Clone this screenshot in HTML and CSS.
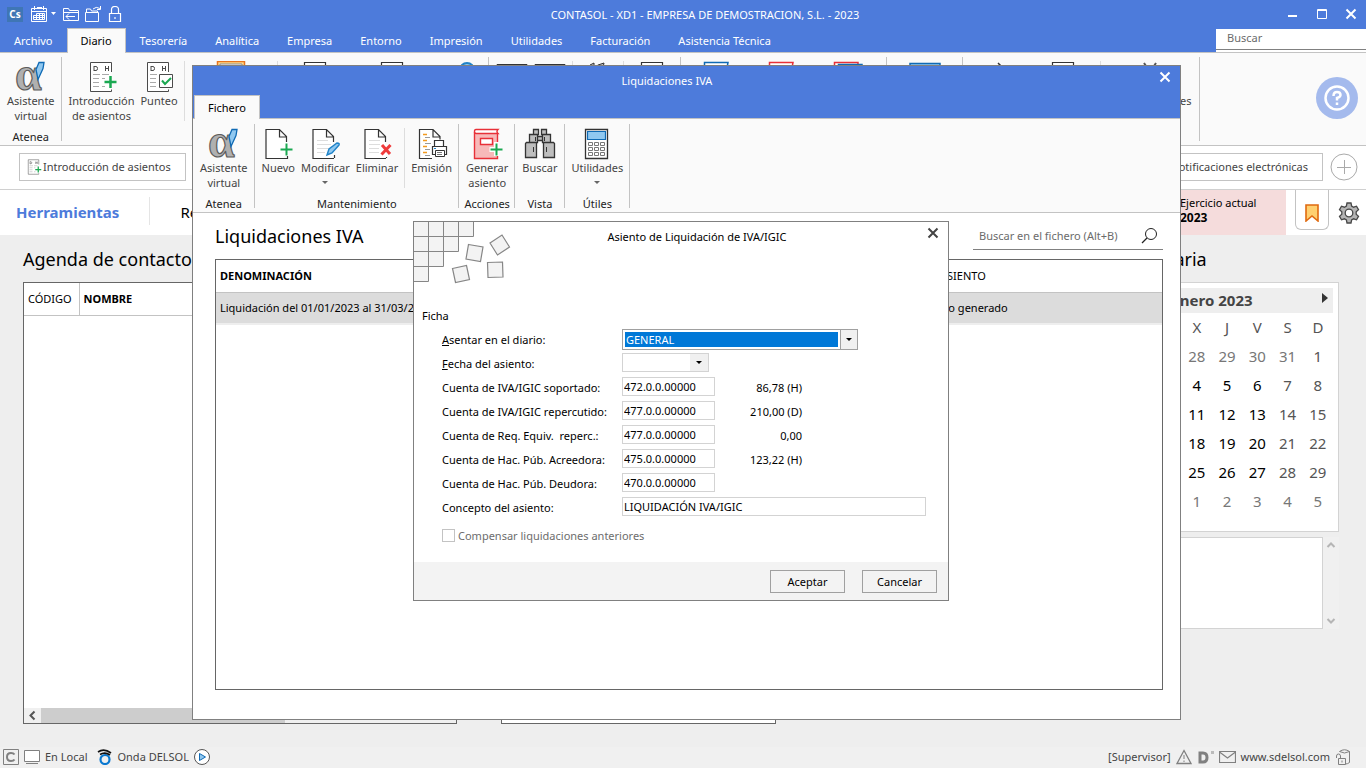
FILE: index.html
```
<!DOCTYPE html>
<html lang="es">
<head>
    <meta charset="UTF-8">
    <meta name="viewport" content="width=device-width, initial-scale=1.0">
    <title>CONTASOL - XD1 - EMPRESA DE DEMOSTRACION, S.L. - 2023</title>
    <link rel="stylesheet" href="styles.css">
</head>
<body>
    <!-- shared icons -->
    <svg class="sprite" width="0" height="0" aria-hidden="true">
        <symbol id="i-alpha" viewBox="0 0 32 32">
            <text x="0" y="29" font-family="Liberation Serif, serif" font-weight="bold" font-size="48" fill="#b0b0b0" stroke="#5c5c5c" stroke-width="1.200">α</text>
            <path d="M24 1.500h5l-1 6-5 11-2-10z" fill="#90c8f0" stroke="#0f6ab4" stroke-width="1.300"/>
        </symbol>
        <symbol id="i-entry" viewBox="0 0 32 32">
            <path d="M25.500 11V1.500h-21v29h21v-2" fill="#fff" stroke="#4b4b4b"/>
            <path d="M8 5v5M8 5.500h2q1.500 0 1.500 2t-1.500 2h-2M19.500 5v5M22.500 5v5M19.500 7.500h3" fill="none" stroke="#4b4b4b"/>
            <path d="M7 13.500h7m2 0h7M7 17.500h6m3 0h3M7 21.500h6M7 25.500h6m3 0h3" stroke="#aaa"/>
            <path d="M18.500 21h12M24.500 15v12" stroke="#1aa851" stroke-width="2.500"/>
        </symbol>
        <symbol id="i-check" viewBox="0 0 32 32">
            <path d="M25.500 11V1.500h-21v29h21v-2" fill="#fff" stroke="#4b4b4b"/>
            <path d="M8 5v5M8 5.500h2q1.500 0 1.500 2t-1.500 2h-2M19.500 5v5M22.500 5v5M19.500 7.500h3" fill="none" stroke="#4b4b4b"/>
            <path d="M7 13.500h7M7 17.500h6M7 21.500h6M7 25.500h6" stroke="#aaa"/>
            <path d="M16.500 13.500h13v13h-13z" fill="#fff" stroke="#4b4b4b"/>
            <path d="M19 19.500l3 3.500 6-6" fill="none" stroke="#1aa851" stroke-width="2"/>
        </symbol>
        <symbol id="i-doc" viewBox="0 0 32 32">
            <path d="M5.500 1.500h21v29h-21z" fill="#fff" stroke="#333" stroke-width="1.200"/>
        </symbol>
        <symbol id="i-new" viewBox="0 0 32 32">
            <path d="M22 30.500h-18v-29h13.500l7 7V14M17.500 1.500v7.500h7M25.500 28v2.500H22" fill="#fff" stroke="#333" stroke-width="1.200"/>
            <path d="M24.500 14v14" stroke="#fff" stroke-width="4"/>
            <path d="M18.500 21.500h12M24.500 15.500v12" stroke="#1aa851" stroke-width="2"/>
        </symbol>
        <symbol id="i-edit" viewBox="0 0 32 32">
            <path d="M25 30.500h-21v-29h13.500l7 7V14M17.500 1.500v7.500h7M25.500 27v3" fill="#fff" stroke="#333" stroke-width="1.200"/>
            <path d="M8 12.500h11M8 16.500h14M8 20.500h12M8 24.500h8" stroke="#ddd"/>
            <path d="M18 27l2-6 8-6q3 0 2 2l-7 8z" fill="#90c8f0" stroke="#1f83c8" stroke-width="1.400"/>
        </symbol>
        <symbol id="i-delete" viewBox="0 0 32 32">
            <path d="M25 30.500h-21v-29h13.500l7 7V14M17.500 1.500v7.500h7M25.500 29v1" fill="#fff" stroke="#333" stroke-width="1.200"/>
            <path d="M8 12.500h11M8 16.500h11M8 20.500h10M8 24.500h10" stroke="#ddd"/>
            <path d="M21 17l8 9M29.500 17l-9 9.500" stroke="#ef3b3b" stroke-width="3"/>
        </symbol>
        <symbol id="i-print" viewBox="0 0 32 32">
            <path d="M16 30.500h-12.500v-29h13.500l7 7v3M17 1.500v7.500h7" fill="#fff" stroke="#333" stroke-width="1.200"/>
            <path d="M7 6.500h4M7 12.500h4M7 18.500h4M7 24.500h4" stroke="#f29a1f" stroke-width="1.400"/>
            <path d="M9 9.500h5M9 15.500h6M9 21.500h5M9 27.500h5" stroke="#999"/>
            <path d="M18.500 19v-6.500h9V19M16.500 18.500h14v8h-14z" fill="#fff" stroke="#333" stroke-width="1.200"/>
            <path d="M19.500 22.500h9v6h-9z" fill="#fff" stroke="#333"/>
            <path d="M21 24.500h5M21 26.500h5" stroke="#777"/>
            <path d="M18 20.500h2" stroke="#1f83c8"/>
        </symbol>
        <symbol id="i-book" viewBox="0 0 32 32">
            <path d="M4 5h22v25H4z" fill="#f7b9b9"/>
            <path d="M27 5.500H5q-1.500 0-1.500-2t1.500-2h22q-2 2 0 4z" fill="#fff" stroke="#e83038" stroke-width="1.400"/>
            <path d="M26.500 5v25.500h-23V4" fill="none" stroke="#e83038" stroke-width="1.400"/>
            <path d="M9.500 10.500h12v6h-12z" fill="#fff" stroke="#e83038" stroke-width="1.400"/>
            <path d="M18.500 21.500h12M25.500 14v14" stroke="#fff" stroke-width="5"/>
            <path d="M19.500 21.500h12M25.500 15.500v12" stroke="#1aa851" stroke-width="2"/>
        </symbol>
        <symbol id="i-binoculars" viewBox="0 0 32 32">
            <path d="M9.500 1.500h5v5h-5zM17.500 1.500h5v5h-5zM5.500 6.500h8v8h-8zM18.500 6.500h8v8h-8zM13.500 8.500h5v4h-5zM1.500 15.500l1-1h10v15h-11zM19.500 14.500h10l1 1v14h-11z" fill="#bdbdbd" stroke="#333" stroke-width="1.300"/>
            <path d="M11.500 9v4M20.500 9v4M9.500 19v5M22.500 19v5" stroke="#333"/>
        </symbol>
        <symbol id="i-calc" viewBox="0 0 32 32">
            <path d="M4.500 1.500h22v29h-22z" fill="#fff" stroke="#333" stroke-width="1.300"/>
            <path d="M6.500 3.500h18v8h-18z" fill="#90c8f0" stroke="#0f6ab4" stroke-width="1.200"/>
            <path d="M7.500 14.500h4v3h-4zM13.500 14.500h4v3h-4zM19.500 14.500h4v3h-4zM7.500 19.500h4v3h-4zM13.500 19.500h4v3h-4zM19.500 19.500h4v3h-4zM7.500 24.500h4v3h-4zM13.500 24.500h4v3h-4zM19.500 24.500h4v3h-4z" fill="none" stroke="#777"/>
        </symbol>
        <symbol id="i-orange" viewBox="0 0 32 32"><path d="M2.500.5h27v29h-27z" fill="#ffd98a" stroke="#e8741c" stroke-width="1.500"/><path d="M5 3h22v25H5z" fill="#fff" stroke="#888"/></symbol>
        <symbol id="i-globe" viewBox="0 0 32 32"><circle cx="23" cy="9" r="7" fill="#90c8f0" stroke="#1f83c8" stroke-width="2"/></symbol>
        <symbol id="i-screen" viewBox="0 0 32 32"><path d="M1 3.500h30V28H1z" fill="#fff" stroke="#333"/></symbol>
        <symbol id="i-stamp" viewBox="0 0 32 32"><path d="M8 4l4-2v5l4-3 6-2-2 9-10 12z" fill="#bbb" stroke="#333"/></symbol>
        <symbol id="i-bluebook" viewBox="0 0 32 32"><path d="M28 1.500H4.500v28h23V4z" fill="#fff" stroke="#0f6ab4" stroke-width="1.500"/></symbol>
        <symbol id="i-redbook" viewBox="0 0 32 32"><path d="M28 1.500H4.500v28h23V4z" fill="#fff" stroke="#e83038" stroke-width="1.500"/></symbol>
        <symbol id="i-twobooks" viewBox="0 0 32 32"><path d="M25 1.500H1.500v28h23z" fill="#fff" stroke="#e83038" stroke-width="1.500"/><path d="M29 3.500H5.500v28h23z" fill="#fff" stroke="#0f6ab4" stroke-width="1.500"/></symbol>
        <symbol id="i-bluescreen" viewBox="0 0 32 32"><path d="M1 2.500h30V28H1z" fill="#90c8f0" stroke="#0f6ab4" stroke-width="1.500"/></symbol>
        <symbol id="i-arrow" viewBox="0 0 32 32"><path d="M16 2l10 10-10 10" fill="none" stroke="#333" stroke-width="1.500"/></symbol>
        <symbol id="i-tools" viewBox="0 0 32 32"><path d="M10 2l4 6-8 18M22 2l-4 6 8 18" fill="none" stroke="#555" stroke-width="2"/></symbol>
        <symbol id="i-close" viewBox="0 0 12 12"><path d="M1.500 1.500l9 9M10.500 1.500l-9 9" fill="none" stroke="currentColor" stroke-width="2"/></symbol>
    </svg>

    <header class="app-header">
        <div class="title-bar">
            <span class="logo">Cs</span>
            <button class="icon-btn" aria-label="Calendario">
                <svg width="26" height="16" viewBox="0 0 26 16" fill="none" stroke="#fff"><path d="M.5 2.500h15v13H.5zM0 5.500h16M3.500 0v4M12.500 0v4M6 1.500h5M5.500 7.500h8v6h-11v-4h11M2.500 11.500h11M5.500 7.500v6M8.500 7.500v6M11.500 7.500v6"/><path d="M20 6h5l-2.500 3z" fill="#fff" stroke="none"/></svg>
            </button>
            <button class="icon-btn" aria-label="Cambiar empresa">
                <svg width="16" height="16" viewBox="0 0 16 16" fill="none" stroke="#fff"><path d="M.5 14.500v-12h5l1 2h9v10zM.5 6.500h15M3 10.500h9M6 7.500l-3 3 3 3"/></svg>
            </button>
            <button class="icon-btn" aria-label="Abrir">
                <svg width="16" height="16" viewBox="0 0 16 16" fill="none" stroke="#fff"><path d="M.5 15.500v-9h13v9zM1.500 6v-3h4l1 2h6v1M8 3q3-3 7-.5M15.500 0v3.500H12"/></svg>
            </button>
            <button class="icon-btn" aria-label="Bloquear">
                <svg width="16" height="16" viewBox="0 0 16 16" fill="none" stroke="#fff"><path d="M2.500 7.500h11v8h-11zM4.500 7V3.500q0-3 3.500-3t3.500 3V7M8 11v2" stroke-width="1.200"/></svg>
            </button>
            <h1 class="app-title">CONTASOL - XD1 - EMPRESA DE DEMOSTRACION, S.L. - 2023</h1>
            <div class="window-controls">
                <button class="icon-btn" aria-label="Minimizar"><svg width="12" height="12"><path d="M1 8h9" stroke="#fff" stroke-width="2"/></svg></button>
                <button class="icon-btn" aria-label="Maximizar"><svg width="12" height="12" fill="none" stroke="#fff"><path d="M1.500 1.500h9v9h-9zM1 2.500h10"/></svg></button>
                <button class="icon-btn" aria-label="Cerrar"><svg width="12" height="12"><use href="#i-close"/></svg></button>
            </div>
        </div>
        <nav class="menu">
            <a href="#">Archivo</a>
            <a href="#" class="active">Diario</a>
            <a href="#">Tesorería</a>
            <a href="#">Analítica</a>
            <a href="#">Empresa</a>
            <a href="#">Entorno</a>
            <a href="#">Impresión</a>
            <a href="#">Utilidades</a>
            <a href="#">Facturación</a>
            <a href="#">Asistencia Técnica</a>
            <input type="search" class="menu-search" placeholder="Buscar" aria-label="Buscar">
        </nav>
    </header>

    <section class="ribbon">
        <div class="ribbon-group">
            <div class="tools">
                <button class="tool"><svg><use href="#i-alpha"/></svg>Asistente<br>virtual</button>
            </div>
            <div class="group-name">Atenea</div>
        </div>
        <div class="ribbon-group">
            <div class="tools">
                <button class="tool"><svg><use href="#i-entry"/></svg>Introducción<br>de asientos</button>
                <button class="tool"><svg><use href="#i-check"/></svg>Punteo</button>
                <span class="divider"></span>
                <button class="tool w-86"><svg><use href="#i-orange"/></svg>Asientos<br>predefinidos</button>
                <span class="divider"></span>
                <button class="tool w-68"><svg><use href="#i-doc"/></svg>Diario</button>
                <button class="tool w-86"><svg><use href="#i-doc"/></svg>Mayor</button>
                <button class="tool w-50"><svg><use href="#i-globe"/></svg>Extractos</button>
            </div>
            <div class="group-name">Diario</div>
        </div>
        <div class="ribbon-group">
            <div class="tools">
                <button class="tool w-38"><svg><use href="#i-screen"/></svg>IVA</button>
                <button class="tool w-38"><svg><use href="#i-screen"/></svg>IGIC</button>
                <span class="divider"></span>
                <button class="tool w-44"><svg><use href="#i-stamp"/></svg>SII</button>
                <span class="divider"></span>
                <button class="tool w-50"><svg><use href="#i-doc"/></svg>Modelos</button>
            </div>
            <div class="group-name">I.V.A./I.G.I.C.</div>
        </div>
        <div class="ribbon-group">
            <div class="tools">
                <button class="tool w-62"><svg><use href="#i-bluebook"/></svg>Emitidas</button>
                <button class="tool w-68"><svg><use href="#i-redbook"/></svg>Recibidas</button>
                <button class="tool w-68"><svg><use href="#i-twobooks"/></svg>Libros</button>
            </div>
            <div class="group-name">Libros</div>
        </div>
        <div class="ribbon-group">
            <div class="tools">
                <button class="tool w-68"><svg><use href="#i-bluescreen"/></svg>Bienes</button>
            </div>
            <div class="group-name">Inmovilizado</div>
        </div>
        <div class="ribbon-group">
            <div class="tools">
                <button class="tool w-62"><svg><use href="#i-arrow"/></svg>Importar</button>
                <button class="tool w-68"><svg><use href="#i-doc"/></svg>Informes</button>
                <span class="divider"></span>
                <button class="tool w-92"><svg><use href="#i-tools"/></svg>Configuraciones</button>
            </div>
            <div class="group-name">Útiles</div>
        </div>
        <button class="help" aria-label="Ayuda">
            <svg width="26" height="26" viewBox="0 0 26 26" fill="none" stroke="#fff" stroke-width="2.500"><circle cx="13" cy="13" r="11.500"/><path d="M9.500 11q0-4 3.500-4t3.500 3q0 2-3.500 3v2.500M13 17.500v2.500"/></svg>
        </button>
    </section>

    <section class="shortcuts">
        <button class="shortcut"><svg width="16" height="16"><use href="#i-entry"/></svg>Introducción de asientos</button>
        <button class="shortcut last">Notificaciones electrónicas</button>
        <button class="add" aria-label="Añadir acceso"><svg width="28" height="28" fill="none" stroke="#aaa"><circle cx="14" cy="14" r="13"/><path d="M7 14.500h14M14.500 7v14"/></svg></button>
    </section>

    <section class="views">
        <a href="#" class="view active">Herramientas</a>
        <a href="#" class="view">Resumen</a>
        <div class="exercise"><span>Ejercicio actual</span><strong>2023</strong></div>
        <button class="bookmark" aria-label="Marcadores"><svg width="16" height="18"><path d="M2 1h12v16l-6-5-6 5z" fill="#ffd070" stroke="#e06a10" stroke-width="1.600"/></svg></button>
        <button class="gear" aria-label="Ajustes">
            <svg width="22" height="22" viewBox="0 0 22 22"><path d="M9 1h4l.6 3 2 1.200 2.900-1 2 3.500-2.300 2v2.600l2.300 2-2 3.500-2.900-1-2 1.200-.6 3H9l-.6-3-2-1.200-2.900 1-2-3.500 2.300-2V9.700l-2.300-2 2-3.500 2.900 1 2-1.200z" fill="#b5b5b5" stroke="#484848" stroke-width="1.300"/><circle cx="11" cy="11" r="3.800" fill="#fff" stroke="#484848" stroke-width="1.300"/></svg>
        </button>
    </section>

    <main class="desk">
        <section class="contacts">
            <h2>Agenda de contactos</h2>
            <div class="list">
                <table>
                    <thead><tr><th class="code">CÓDIGO</th><th>NOMBRE</th></tr></thead>
                    <tbody><tr><td colspan="2" class="empty">No hay registros</td></tr></tbody>
                </table>
                <div class="scroll-x">
                    <svg width="17" height="15" fill="none" stroke="#555" stroke-width="2"><path d="M10.500 3.500l-4 4 4 4"/></svg>
                    <span class="thumb"></span>
                </div>
            </div>
        </section>
        <section class="messages">
            <h2>Mensajes</h2>
            <div class="list"></div>
        </section>
        <section class="agenda">
            <h2>Agenda diaria</h2>
            <div class="calendar">
                <div class="month">Enero 2023<button class="next" aria-label="Mes siguiente"><svg width="6" height="10"><path d="M0 0l6 5-6 5z" fill="#333"/></svg></button></div>
                <table>
                    <thead><tr><th></th><th>L</th><th>M</th><th>X</th><th>J</th><th>V</th><th>S</th><th>D</th></tr></thead>
                    <tbody>
                        <tr class="off"><td></td><td>26</td><td>27</td><td>28</td><td>29</td><td>30</td><td>31</td><td class="end">1</td></tr>
                        <tr><td></td><td>2</td><td>3</td><td>4</td><td>5</td><td>6</td><td class="end">7</td><td class="end">8</td></tr>
                        <tr><td></td><td>9</td><td>10</td><td>11</td><td>12</td><td>13</td><td class="end">14</td><td class="end">15</td></tr>
                        <tr><td></td><td>16</td><td>17</td><td>18</td><td>19</td><td>20</td><td class="end">21</td><td class="end">22</td></tr>
                        <tr><td></td><td>23</td><td>24</td><td>25</td><td>26</td><td>27</td><td class="end">28</td><td class="end">29</td></tr>
                        <tr class="off"><td></td><td>30</td><td>31</td><td>1</td><td>2</td><td>3</td><td>4</td><td>5</td></tr>
                    </tbody>
                </table>
            </div>
            <div class="notes">
                <div class="note-text"></div>
                <div class="scroll-y">
                    <svg width="10" height="8" fill="none" stroke="#b5b5b5" stroke-width="2"><path d="M1.500 6l3.500-3.500L8.500 6"/></svg>
                    <svg width="10" height="8" fill="none" stroke="#b5b5b5" stroke-width="2"><path d="M1.500 2l3.500 3.500L8.500 2"/></svg>
                </div>
            </div>
        </section>
    </main>

    <footer class="status">
        <div class="status-left">
            <svg width="16" height="16" fill="none" stroke="#808080"><path d="M.5.500h15v15H.5z"/><path d="M11.500 5.500q-1-1.500-3.500-1.500-4 0-4 4t4 4q2.500 0 3.500-1.500" stroke-width="2"/></svg>
            <svg width="18" height="16" fill="none" stroke="#808080"><path d="M1.500 1.500h15v11h-15z" fill="#fff"/><path d="M3 14.500h12"/></svg>
            <span class="local">En Local</span>
            <svg width="16" height="16" fill="none"><circle cx="8" cy="10.500" r="4.500" stroke="#0a78d0" stroke-width="2.200"/><path d="M1 3q6-4 13 1M3 5.500q5-3 10 .5" stroke="#111" stroke-width="1.700"/></svg>
            <span>Onda DELSOL</span>
            <svg width="18" height="18"><circle cx="9" cy="9" r="7.500" fill="#fff" stroke="#555"/><path d="M6.500 5.500l6 3.500-6 3.500z" fill="#90c8f0" stroke="#0f6ab4"/></svg>
        </div>
        <div class="status-right">
            <span>[Supervisor]</span>
            <svg width="16" height="16" fill="none" stroke="#808080"><path d="M8 1.500l7 13H1z" stroke-width="1.300"/><path d="M8 6v4M8 11.500v1.500"/></svg>
            <svg width="17" height="16" fill="none"><path d="M3 4h3q4 0 4 4.500T6 13H3z" stroke="#808080" stroke-width="3"/><path d="M14 2h3v3h-3z" fill="#bbb"/></svg>
            <svg width="17" height="16" fill="none" stroke="#808080"><path d="M.5 2.500h16v11H.5zM.5 3l8 6 8-6" stroke-width="1.200"/></svg>
            <a href="#">www.sdelsol.com</a>
            <svg width="16" height="16" fill="none" stroke="#808080"><path d="M4.500 2.500q5-3.500 10 0v11q-2 1.500-4 1.500M4.500 2.500q5 3 10 0"/><path d="M3.500 9.500h7v6h-7zM1.500 9V7q0-2 2-2t2 2v2M7 11.500v2"/></svg>
        </div>
    </footer>

    <!-- Liquidaciones IVA -->
    <section class="window">
        <div class="window-head">
            <div class="window-bar">
                <h2>Liquidaciones IVA</h2>
                <button class="icon-btn" aria-label="Cerrar"><svg width="12" height="12"><use href="#i-close"/></svg></button>
            </div>
            <a href="#" class="window-tab">Fichero</a>
        </div>
        <div class="ribbon">
            <div class="ribbon-group">
                <div class="tools">
                    <button class="tool"><svg><use href="#i-alpha"/></svg>Asistente<br>virtual</button>
                </div>
                <div class="group-name">Atenea</div>
            </div>
            <div class="ribbon-group">
                <div class="tools">
                    <button class="tool"><svg><use href="#i-new"/></svg>Nuevo</button>
                    <button class="tool"><svg><use href="#i-edit"/></svg>Modificar<span class="caret"></span></button>
                    <button class="tool"><svg><use href="#i-delete"/></svg>Eliminar</button>
                    <span class="divider"></span>
                    <button class="tool"><svg><use href="#i-print"/></svg>Emisión</button>
                </div>
                <div class="group-name">Mantenimiento</div>
            </div>
            <div class="ribbon-group">
                <div class="tools">
                    <button class="tool"><svg><use href="#i-book"/></svg>Generar<br>asiento</button>
                </div>
                <div class="group-name">Acciones</div>
            </div>
            <div class="ribbon-group">
                <div class="tools">
                    <button class="tool"><svg><use href="#i-binoculars"/></svg>Buscar</button>
                </div>
                <div class="group-name">Vista</div>
            </div>
            <div class="ribbon-group">
                <div class="tools">
                    <button class="tool"><svg><use href="#i-calc"/></svg>Utilidades<span class="caret"></span></button>
                </div>
                <div class="group-name">Útiles</div>
            </div>
        </div>
        <div class="window-body">
            <div class="file-head">
                <h3>Liquidaciones IVA</h3>
                <div class="file-search">
                    <input type="text" placeholder="Buscar en el fichero (Alt+B)" aria-label="Buscar en el fichero">
                    <svg width="18" height="18" fill="none" stroke="#222"><circle cx="10" cy="7" r="5.500"/><path d="M6 11l-5 5" stroke-width="1.300"/></svg>
                </div>
            </div>
            <div class="file-list">
                <table>
                    <thead><tr><th class="bold">DENOMINACIÓN</th><th class="entry">ASIENTO</th></tr></thead>
                    <tbody><tr><td>Liquidación del 01/01/2023 al 31/03/2023</td><td class="entry">No generado</td></tr></tbody>
                </table>
            </div>
        </div>
    </section>

    <!-- Asiento de liquidación -->
    <form class="dialog" role="dialog" aria-label="Asiento de Liquidación de IVA/IGIC">
        <div class="dialog-head">
            <svg class="squares" width="97" height="64" fill="#f3f3f3" stroke="#868686">
                <path d="M-.5-.5h15v15h-15zM14.500-.5h15v15h-15zM29.500-.5h15v15h-15zM44.500-.5h15v15h-15zM-.5 14.500h15v15h-15zM14.500 14.500h15v15h-15zM29.500 14.500h15v15h-15zM-.5 29.500h15v15h-15zM14.500 29.500h15v15h-15zM-.5 44.500h15v15h-15z"/>
                <path d="M54.500 22.500l14.500 2.500-2.500 14.500-14.500-2.500zM76 21l12-8 7.500 12-12 8zM38.500 46.500l14-3 3 14-14 3zM73.500 40.500l15-.5.5 15-15 .5z" stroke-width="1.200"/>
            </svg>
            <h2>Asiento de Liquidación de IVA/IGIC</h2>
            <button type="button" class="icon-btn" aria-label="Cerrar"><svg width="12" height="12"><use href="#i-close"/></svg></button>
        </div>
        <fieldset>
            <legend>Ficha</legend>
            <div class="row">
                <label for="diario"><u>A</u>sentar en el diario:</label>
                <span class="combo"><select id="diario"><option>GENERAL</option></select></span>
            </div>
            <div class="row">
                <label for="fecha"><u>F</u>echa del asiento:</label>
                <span class="date"><input type="text" id="fecha"><button type="button" aria-label="Elegir fecha"><i class="caret"></i></button></span>
            </div>
            <div class="row">
                <label for="soportado">Cuenta de IVA/IGIC soportado:</label>
                <input type="text" id="soportado" class="account" value="472.0.0.00000">
                <output>86,78 (H)</output>
            </div>
            <div class="row">
                <label for="repercutido">Cuenta de IVA/IGIC repercutido:</label>
                <input type="text" id="repercutido" class="account" value="477.0.0.00000">
                <output>210,00 (D)</output>
            </div>
            <div class="row">
                <label for="equivalencia">Cuenta de Req. Equiv.&nbsp; reperc.:</label>
                <input type="text" id="equivalencia" class="account" value="477.0.0.00000">
                <output>0,00</output>
            </div>
            <div class="row">
                <label for="acreedora">Cuenta de Hac. Púb. Acreedora:</label>
                <input type="text" id="acreedora" class="account" value="475.0.0.00000">
                <output>123,22 (H)</output>
            </div>
            <div class="row">
                <label for="deudora">Cuenta de Hac. Púb. Deudora:</label>
                <input type="text" id="deudora" class="account" value="470.0.0.00000">
            </div>
            <div class="row">
                <label for="concepto">Concepto del asiento:</label>
                <input type="text" id="concepto" class="concept" value="LIQUIDACIÓN IVA/IGIC">
            </div>
            <div class="check-row">
                <input type="checkbox" id="compensar" disabled>
                <label for="compensar">Compensar liquidaciones anteriores</label>
            </div>
        </fieldset>
        <div class="dialog-foot">
            <button type="submit">Aceptar</button>
            <button type="button">Cancelar</button>
        </div>
    </form>
</body>
</html>
```

FILE: styles.css
```
* {
    box-sizing: border-box;
}
body {
    position: relative;
    display: flex;
    flex-direction: column;
    min-height: 100vh;
    margin: 0;
    overflow: hidden;
    background: #eee;
    color: #000;
    font: 11px/15px "Noto Sans", "Open Sans", sans-serif;
}
h1, h2, h3 {
    margin: 0;
    font-weight: normal;
}
a {
    color: inherit;
    text-decoration: none;
}
button, input, select {
    margin: 0;
    padding: 0;
    border: 0;
    border-radius: 0;
    background: none;
    color: inherit;
    font: inherit;
    outline: none;
}
svg {
    display: block;
    flex: none;
}
table {
    width: 100%;
    border-collapse: collapse;
}
th, td {
    padding: 0;
    text-align: left;
    font-weight: normal;
}
.sprite {
    position: absolute;
}

/* header */
.app-header {
    background: #4d7bdb;
    color: #fff;
}
.title-bar {
    display: flex;
    align-items: center;
    gap: 6px;
    height: 28px;
    padding: 0 9px 0 7px;
}
.logo {
    width: 16px;
    margin-right: 2px;
    background: #3f76b5;
    font-size: 10px;
    font-weight: bold;
    text-align: center;
}
.app-title {
    flex: 1;
    font-size: 11px;
    text-align: center;
}
.window-controls {
    display: flex;
    gap: 17px;
}
.menu {
    display: flex;
    height: 25px;
    border-bottom: 1px solid #c3c3c3;
}
.menu a {
    padding: 5px 14px 0;
}
.menu .active {
    height: 25px;
    padding: 4px 13px 0;
    border: 1px solid #c3c3c3;
    border-bottom: 0;
    background: #fafafa;
    color: #000;
}
.menu-search {
    width: 150px;
    height: 21px;
    margin: 1px 0 0 auto;
    padding: 0 11px 4px;
    border-bottom: 1px solid #808080;
    background: #fff;
    box-shadow: 0 2px #fff;
}
::placeholder {
    color: #6b6b6b;
    opacity: 1;
}

/* ribbon */
.ribbon {
    display: flex;
    height: 93px;
    border-bottom: 1px solid #c3c3c3;
    background: #fafafa;
}
.ribbon-group {
    flex: none;
    padding: 8px 4px 0;
    background: linear-gradient(#c3c3c3, #c3c3c3) right 4px / 1px 84px no-repeat;
}
.tools {
    display: flex;
    align-items: flex-start;
    height: 62px;
}
.tool {
    display: block;
    padding: 0 3px;
    color: #444;
    text-align: center;
}
.tool svg {
    width: 32px;
    height: 32px;
    margin: 0 auto;
}
.group-name {
    margin-top: 6px;
    text-align: center;
    color: #222;
}
.divider {
    width: 1px;
    height: 60px;
    margin: 0 3px;
    background: #ddd;
}
.caret {
    display: block;
    width: 0;
    margin: 6px auto 0;
    border: 3px solid transparent;
    border-top-color: #666;
    border-bottom: 0;
}
.w-38 { width: 38px; }
.w-44 { width: 44px; }
.w-50 { width: 50px; }
.w-62 { width: 62px; }
.w-68 { width: 68px; }
.w-86 { width: 86px; }
.w-92 { width: 92px; }
.help {
    display: grid;
    place-items: center;
    width: 42px;
    height: 42px;
    margin: 24px 8px 0 auto;
    border-radius: 50%;
    background: #a4baed;
}

/* shortcuts */
.shortcuts {
    display: flex;
    align-items: center;
    height: 44px;
    padding: 0 8px 2px 19px;
    border-bottom: 1px solid #d0d0d0;
    background: #fff;
}
.shortcut {
    display: flex;
    align-items: center;
    gap: 1px;
    height: 28px;
    padding: 0 14px 0 6px;
    border: 1px solid #c3c3c3;
    color: #444;
}
.shortcut.last {
    margin-left: auto;
    padding-left: 20px;
}
.add {
    margin-left: 7px;
}

/* views */
.views {
    display: flex;
    height: 45px;
    background: #fff;
}
.view {
    margin: 7px 0 10px;
    padding: 0 30px;
    font-size: 15px;
    line-height: 30px;
}
.view.active {
    padding-left: 16px;
    border-right: 1px solid #e5e5e5;
    color: #4d7bdb;
    font-weight: bold;
}
.exercise {
    display: flex;
    flex-direction: column;
    width: 112px;
    margin-left: auto;
    padding: 5px 0 0 6px;
    background: #f5dcdc;
}
.exercise strong {
    font-size: 12px;
}
.bookmark {
    display: grid;
    place-items: center;
    width: 34px;
    height: 40px;
    margin: 0 9px;
    padding-top: 6px;
    border: 1px solid #c3c3c3;
    border-top: 0;
    border-radius: 0 0 6px 6px;
}
.gear {
    margin-right: 6px;
}

/* desk */
.desk {
    flex: 1;
    display: flex;
    gap: 44px;
    padding: 12px 27px 23px 23px;
}
.desk h2 {
    margin-bottom: 11px;
    font-size: 18px;
    line-height: 24px;
}
.contacts, .messages {
    display: flex;
    flex-direction: column;
}
.contacts {
    width: 434px;
}
.messages {
    width: 275px;
}
.list {
    flex: 1;
    display: flex;
    flex-direction: column;
    border: 1px solid #666;
    background: #fff;
}
.list th {
    height: 32px;
    padding: 0 4px;
    border-bottom: 1px solid #c3c3c3;
    font-weight: bold;
}
.list .code {
    width: 55px;
    border-right: 1px solid #c3c3c3;
    font-weight: normal;
}
.list .empty {
    padding-top: 2px;
    text-align: center;
    font-style: italic;
}
.scroll-x {
    display: flex;
    margin-top: auto;
    background: #f0f0f0;
}
.thumb {
    width: 244px;
    background: #cdcdcd;
}
.agenda {
    width: 254px;
    margin-left: auto;
}
.agenda h2 {
    padding-left: 4px;
}
.calendar {
    height: 250px;
    padding: 5px;
    border: 1px solid #d3d3d3;
    background: #fff;
    color: #000;
    font-size: 15px;
}
.month {
    position: relative;
    background: #eee;
    color: #444;
    font-weight: bold;
    line-height: 25px;
    text-align: center;
}
.next {
    position: absolute;
    top: 5px;
    right: 5px;
}
.calendar table {
    table-layout: fixed;
}
.calendar th, .calendar td {
    height: 29px;
    text-align: center;
}
.calendar th, .calendar .end {
    color: #555;
}
.off {
    color: #777;
}
.notes {
    display: flex;
    height: 92px;
    margin-top: 5px;
}
.note-text {
    flex: 1;
    border: 1px solid #d3d3d3;
    background: #fff;
}
.scroll-y {
    display: flex;
    flex-direction: column;
    justify-content: space-between;
    padding: 4px 3px;
    background: #f0f0f0;
}

/* status bar */
.status {
    display: flex;
    justify-content: space-between;
    height: 21px;
    padding: 0 15px 2px 3px;
    background: #f0f0f0;
    color: #444;
}
.status-left, .status-right {
    display: flex;
    align-items: center;
    gap: 4px;
}
.status-right {
    gap: 5px;
}
.local {
    margin-right: 6px;
}

/* file window */
.window {
    position: absolute;
    inset: 65px 185px 48px 192px;
    display: flex;
    flex-direction: column;
    border: 1px solid #808080;
    background: #fff;
}
.window-head {
    height: 53px;
    background: #4d7bdb;
    color: #fff;
    border-bottom: 1px solid #c3c3c3;
}
.window-bar {
    display: flex;
    height: 29px;
    padding-right: 9px;
}
.window-bar h2 {
    flex: 1;
    padding-right: 18px;
    font-size: 11px;
    line-height: 29px;
    text-align: center;
}
.window-bar .icon-btn {
    height: 22px;
}
.window-tab {
    display: inline-block;
    height: 24px;
    margin-left: 1px;
    padding: 4px 13px 0;
    border: 1px solid #c3c3c3;
    border-bottom: 0;
    background: #fafafa;
    color: #000;
}
.window .ribbon {
    height: 94px;
    padding-top: 1px;
}
.window-body {
    flex: 1;
    display: flex;
    flex-direction: column;
    padding: 9px 17px 29px 22px;
}
.file-head {
    display: flex;
    justify-content: space-between;
    margin-bottom: 9px;
}
.file-head h3 {
    font-size: 18px;
    line-height: 28px;
}
.file-search {
    display: flex;
    align-items: center;
    width: 190px;
    border-bottom: 1px solid #808080;
    padding: 0 4px 0 6px;
}
.file-search input {
    flex: 1;
    min-width: 0;
}
.file-list {
    flex: 1;
    border: 1px solid #666;
}
.file-list th, .file-list td {
    height: 32px;
    padding: 0 4px;
}
.file-list th {
    border-bottom: 1px solid #c3c3c3;
}
.file-list td {
    border-bottom: 2px solid #eee;
    background: #dcdcdc;
}
.file-list .bold {
    font-weight: bold;
}
.file-list .entry {
    width: 226px;
}

/* dialog */
.dialog {
    position: absolute;
    top: 221px;
    left: 413px;
    width: 536px;
    border: 1px solid #808080;
    background: #fff;
}
.dialog-head {
    display: flex;
    height: 84px;
    padding-right: 9px;
}
.dialog-head h2 {
    flex: 1;
    padding-right: 44px;
    font-size: 11px;
    line-height: 30px;
    text-align: center;
}
.dialog-head .icon-btn {
    height: 22px;
    color: #444;
}
.dialog fieldset {
    margin: 0;
    padding: 0 8px;
    border: 0;
}
.dialog legend {
    padding: 2px 0 6px;
}
.row {
    display: grid;
    grid-template-columns: 180px auto auto;
    justify-content: start;
    height: 24px;
    padding-left: 20px;
}
.row label {
    padding-top: 3px;
}
.row input {
    height: 19px;
    padding: 0 1px 1px;
    border: 1px solid #d3d3d3;
}
.row .account {
    width: 93px;
}
.row .concept {
    width: 304px;
}
.row output {
    width: 87px;
    padding-top: 3px;
    text-align: right;
}
.combo {
    position: relative;
    width: 236px;
    height: 21px;
    border: 1px solid #a0a0a0;
}
.combo::before {
    content: "";
    position: absolute;
    inset: 0 0 0 auto;
    width: 16px;
    border-left: 1px solid #a0a0a0;
    background: #f0f0f0;
}
.combo::after {
    content: "";
    position: absolute;
    top: 8px;
    right: 5px;
    border: 3px solid transparent;
    border-top-color: #000;
    border-bottom: 0;
}
.combo select {
    display: block;
    width: 213px;
    height: 15px;
    margin: 2px;
    padding-left: 1px;
    background: #0078d7;
    color: #fff;
    line-height: 15px;
    appearance: none;
}
.date {
    display: flex;
    width: 87px;
    height: 19px;
    border: 1px solid #d3d3d3;
}
.date input {
    flex: 1;
    width: 60px;
    height: 17px;
    border: 0;
}
.date button {
    width: 18px;
    background: #f0f0f0;
}
.date .caret {
    margin: 0 auto;
    border-top-color: #000;
}
.check-row {
    display: flex;
    align-items: center;
    gap: 3px;
    height: 17px;
    margin-top: 6px;
    padding-left: 20px;
    color: #6d6d6d;
}
.check-row input {
    width: 13px;
    height: 13px;
    border: 1px solid #c3c3c3;
    appearance: none;
}
.dialog-foot {
    display: flex;
    justify-content: flex-end;
    gap: 17px;
    margin-top: 18px;
    padding: 8px 11px 7px;
    background: #f3f3f3;
}
.dialog-foot button {
    width: 75px;
    height: 23px;
    border: 1px solid #a0a0a0;
}
```
